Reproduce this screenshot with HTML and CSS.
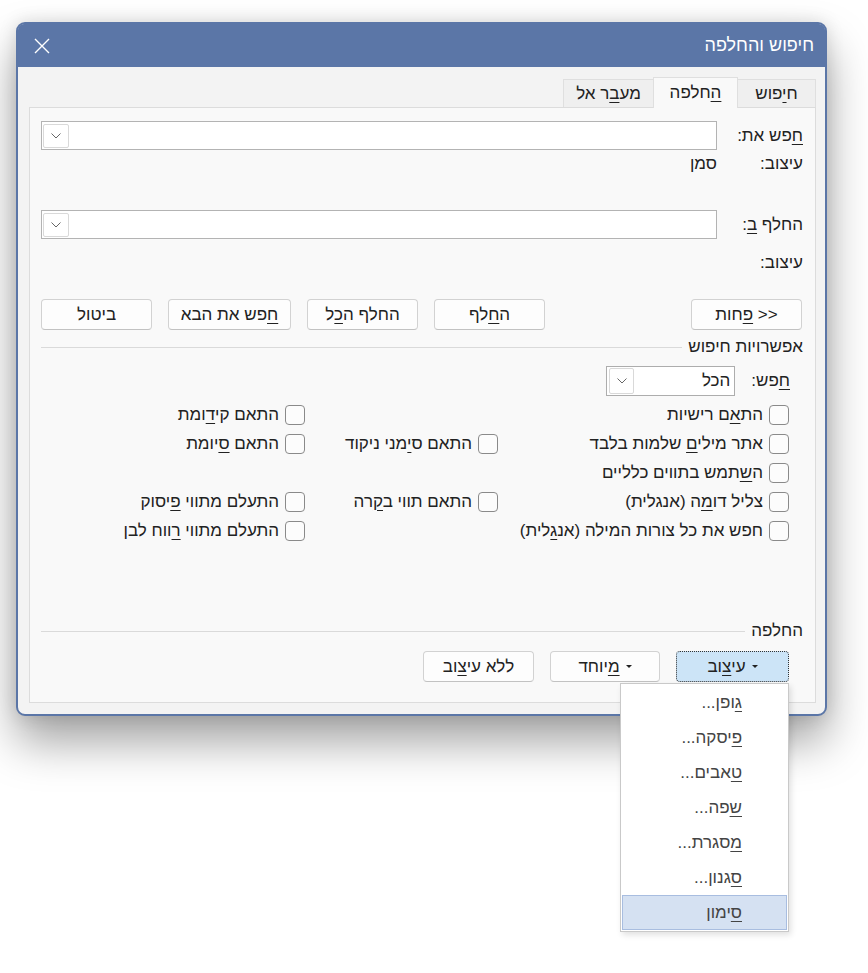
FILE: index.html
```html
<!DOCTYPE html>
<html lang="he">
<head>
<meta charset="utf-8">
<title>חיפוש והחלפה</title>
<link rel="stylesheet" href="styles.css">
</head>
<body>
<div class="dialog">
  <div class="titlebar">
    <span class="title">חיפוש והחלפה</span>
    <span class="close"><svg viewBox="0 0 16 16" width="16" height="16"><path d="M1 1 L15 15 M15 1 L1 15"/></svg></span>
  </div>
  <div class="dbody">
    <div class="tabs">
      <div class="tab t1">ח<u>י</u>פוש</div>
      <div class="tab t2 active"><u>ה</u>חלפה</div>
      <div class="tab t3">מע<u>ב</u>ר אל</div>
    </div>
    <div class="panel">
      <div class="field-row">
        <div class="lbl"><u>ח</u>פש את:</div>
        <div class="combo"><span class="combo-btn"><svg class="chev" viewBox="0 0 10 6"><path d="M0.5 0.5 L5 5 L9.5 0.5"/></svg></span></div>
      </div>
      <div class="fmt-row fmt1"><div class="lbl">עיצוב:</div><div>סמן</div></div>
      <div class="field-row row2">
        <div class="lbl">החלף <u>ב</u>:</div>
        <div class="combo"><span class="combo-btn"><svg class="chev" viewBox="0 0 10 6"><path d="M0.5 0.5 L5 5 L9.5 0.5"/></svg></span></div>
      </div>
      <div class="fmt-row fmt2"><div class="lbl">עיצוב:</div></div>
      <div class="btn-row">
        <button class="btn"><span>&lt;&lt; <u>פ</u>חות</span></button>
        <div class="btn-group">
          <button class="btn"><span>ה<u>ח</u>לף</span></button>
          <button class="btn"><span>החלף ה<u>כ</u>ל</span></button>
          <button class="btn wide"><span><u>ח</u>פש את הבא</span></button>
          <button class="btn"><span>ביטול</span></button>
        </div>
      </div>
      <div class="section-head">אפשרויות חיפוש</div>
      <div class="search-in">
        <span><u>ח</u>פש:</span>
        <div class="select"><span>הכל</span><span class="combo-btn small"><svg class="chev" viewBox="0 0 10 6"><path d="M0.5 0.5 L5 5 L9.5 0.5"/></svg></span></div>
      </div>
      <div class="options">
        <div class="opt"><span class="cb"></span><span>הת<u>א</u>ם רישיות</span></div>
        <div></div>
        <div class="opt"><span class="cb"></span><span>התאם קי<u>ד</u>ומת</span></div>

        <div class="opt"><span class="cb"></span><span>אתר מילי<u>ם</u> שלמות בלבד</span></div>
        <div class="opt"><span class="cb"></span><span>התאם ס<u>י</u>מני ניקוד</span></div>
        <div class="opt"><span class="cb"></span><span>התאם <u>ס</u>יומת</span></div>

        <div class="opt"><span class="cb"></span><span>ה<u>ש</u>תמש בתווים כלליים</span></div>
        <div></div>
        <div></div>

        <div class="opt"><span class="cb"></span><span>צליל דו<u>מ</u>ה (אנגלית)</span></div>
        <div class="opt"><span class="cb"></span><span>התאם תווי ב<u>ק</u>רה</span></div>
        <div class="opt"><span class="cb"></span><span>התעלם מתווי <u>פ</u>יסוק</span></div>

        <div class="opt"><span class="cb"></span><span>חפש את כל צורות המילה (אנ<u>ג</u>לית)</span></div>
        <div></div>
        <div class="opt"><span class="cb"></span><span>התעלם מתווי <u>ר</u>ווח לבן</span></div>
      </div>
      <div class="section-head replace">החלפה</div>
      <div class="btn-row2">
        <div class="fmt-wrap">
          <button class="btn focus"><span class="tri"></span><span>עי<u>צ</u>וב</span></button>
          <div class="menu">
            <div class="item"><u>ג</u>ופן...</div>
            <div class="item"><u>פ</u>יסקה...</div>
            <div class="item"><u>ט</u>אבים...</div>
            <div class="item"><u>ש</u>פה...</div>
            <div class="item"><u>מ</u>סגרת...</div>
            <div class="item"><u>ס</u>גנון...</div>
            <div class="item hl"><u>ס</u>ימון</div>
          </div>
        </div>
        <button class="btn b110"><span class="tri"></span><span><u>מ</u>יוחד</span></button>
        <button class="btn"><span>ללא עי<u>צ</u>וב</span></button>
      </div>
    </div>
  </div>
</div>
</body>
</html>
```

FILE: styles.css
```css
* { box-sizing: border-box; }
html, body { margin: 0; padding: 0; background: #ffffff; }
body {
  width: 868px;
  height: 973px;
  overflow: hidden;
  font-family: "Liberation Sans", "DejaVu Sans", sans-serif;
  font-size: 17px;
  color: #222222;
}
u { text-decoration: underline; text-underline-offset: 3px; text-decoration-thickness: 1px; }

.dialog {
  direction: rtl;
  margin: 22px 0 0 16px;
  width: 811px;
  height: 694px;
  border: 2px solid #5b76a7;
  border-radius: 9px;
  background: #f3f3f3;
  box-shadow: 0 26px 46px rgba(0,0,0,0.36), 0 0 18px rgba(0,0,0,0.13);
  display: flex;
  flex-direction: column;
}
.titlebar {
  height: 43px;
  flex: none;
  background: #5b76a7;
  color: #ffffff;
  display: flex;
  align-items: center;
  justify-content: space-between;
  padding: 0 11px 0 16px;
  border-radius: 6px 6px 0 0;
}
.title { font-size: 18px; }
.close { display: flex; }
.close svg path { stroke: #ffffff; stroke-width: 1.4; fill: none; }

.dbody {
  flex: 1;
  display: flex;
  flex-direction: column;
  padding: 10px 9px 11px 11px;
}
.tabs {
  display: flex;
  align-items: flex-end;
  height: 30px;
  flex: none;
}
.tab {
  height: 28px;
  line-height: 27px;
  text-align: center;
  background: #efefef;
  border: 1px solid #dfdfdf;
  border-bottom: 0;
  margin-left: -1px;
}
.t1 { width: 79px; }
.t2 { width: 85px; }
.t3 { width: 91px; }
.tab.active {
  height: 31px;
  line-height: 30px;
  background: #f9f9f9;
  margin-bottom: -1px;
  position: relative;
  z-index: 1;
}
.panel {
  flex: 1;
  display: flex;
  flex-direction: column;
  background: #f9f9f9;
  border: 1px solid #dcdcdc;
  padding: 13px 12px 20px 11px;
}

.field-row { display: flex; align-items: center; height: 29px; }
.row2 { margin-top: 32px; }
.lbl { width: 86px; flex: none; }
.combo {
  flex: 1;
  height: 29px;
  background: #ffffff;
  border: 1px solid #b3b3b3;
  display: flex;
  align-items: center;
  justify-content: flex-end;
  padding: 0 1px;
}
.combo-btn {
  width: 26px;
  height: 24px;
  border: 1px solid #d9d9d9;
  border-radius: 2px;
  background: #ffffff;
  display: flex;
  align-items: center;
  justify-content: center;
}
.combo-btn.small { width: 25px; height: 26px; }
.chev { width: 10px; height: 6px; }
.chev path { fill: none; stroke: #666666; stroke-width: 1; }

.fmt-row { display: flex; height: 28px; line-height: 28px; }
.fmt2 { margin-top: 10px; }

.btn-row {
  display: flex;
  justify-content: space-between;
  margin-top: 22px;
  padding-right: 1px;
}
.btn-group { display: flex; gap: 16px; }
.btn {
  font: inherit;
  color: inherit;
  direction: rtl;
  width: 111px;
  height: 31px;
  padding: 0;
  background: #fdfdfd;
  border: 1px solid #d2d2d2;
  border-bottom-color: #c2c2c2;
  border-radius: 4px;
  display: flex;
  align-items: center;
  justify-content: center;
  gap: 6px;
}
.btn.wide { width: 123px; }
.btn.b110 { width: 110px; }

.section-head {
  display: flex;
  align-items: center;
  height: 20px;
  margin-top: 7px;
  gap: 6px;
  white-space: nowrap;
}
.section-head::after {
  content: "";
  flex: 1;
  height: 1px;
  background: #dadada;
}

.search-in {
  display: flex;
  align-items: center;
  height: 30px;
  margin-top: 9px;
  padding-right: 13px;
  gap: 16px;
}
.select {
  width: 129px;
  height: 30px;
  background: #ffffff;
  border: 1px solid #adadad;
  display: flex;
  align-items: center;
  justify-content: space-between;
  padding: 0 4px 0 2px;
}

.options {
  display: grid;
  grid-template-columns: 291px 193px 1fr;
  grid-auto-rows: 29px;
  margin-top: 4px;
  padding-right: 14px;
}
.opt {
  display: flex;
  align-items: center;
  gap: 6px;
  white-space: nowrap;
}
.cb {
  width: 20px;
  height: 20px;
  flex: none;
  border: 1px solid #8a8a8a;
  border-radius: 4px;
  background: #fcfcfc;
}

.replace { margin-top: auto; }
.btn-row2 {
  display: flex;
  gap: 16px;
  margin-top: 10px;
  padding-right: 14px;
}
.fmt-wrap { position: relative; }
.btn.focus {
  width: 113px;
  background: #cce4f7;
  border: 1px dotted #333333;
}
.tri {
  width: 0;
  height: 0;
  border-left: 3px solid transparent;
  border-right: 3px solid transparent;
  border-top: 3px solid #222222;
}
.menu {
  position: absolute;
  right: 0;
  top: 32px;
  width: 169px;
  background: #ffffff;
  border: 1px solid #c9c9c9;
  box-shadow: 2px 3px 6px rgba(0,0,0,0.12);
  padding: 1px;
  z-index: 5;
  color: #444444;
}
.item {
  height: 35px;
  line-height: 35px;
  padding-right: 45px;
}
.item.hl {
  background: #d5e1f2;
  border: 1px solid #a8bde0;
  line-height: 33px;
  padding-right: 44px;
}
```
